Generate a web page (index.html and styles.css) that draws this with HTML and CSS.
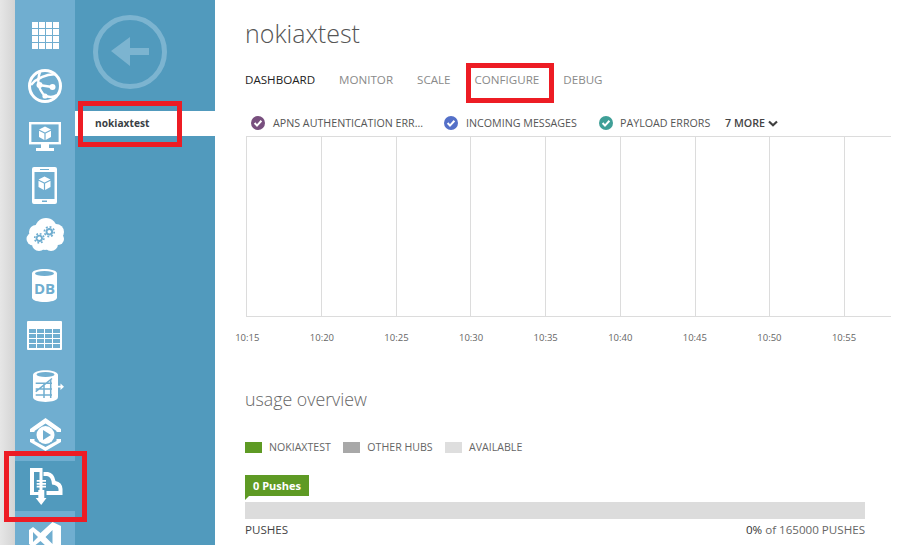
FILE: index.html
```html
<!DOCTYPE html>
<html lang="en">
<head>
    <meta charset="UTF-8">
    <title>nokiaxtest</title>
    <link rel="stylesheet" href="styles.css">
</head>
<body>
    <div class="page">
        <div class="edge"></div>

        <div class="rail">
            <svg class="rail-icon" viewBox="0 0 60 50">
                <g fill="#fff">
                    <rect x="17" y="11" width="6" height="6"/><rect x="24" y="11" width="6" height="6"/><rect x="31" y="11" width="6" height="6"/><rect x="38" y="11" width="6" height="6"/>
                    <rect x="17" y="18" width="6" height="6"/><rect x="24" y="18" width="6" height="6"/><rect x="31" y="18" width="6" height="6"/><rect x="38" y="18" width="6" height="6"/>
                    <rect x="17" y="25" width="6" height="6"/><rect x="24" y="25" width="6" height="6"/><rect x="31" y="25" width="6" height="6"/><rect x="38" y="25" width="6" height="6"/>
                    <rect x="17" y="32" width="6" height="6"/><rect x="24" y="32" width="6" height="6"/><rect x="31" y="32" width="6" height="6"/><rect x="38" y="32" width="6" height="6"/>
                </g>
            </svg>
            <svg class="rail-icon" viewBox="0 0 60 50">
                <circle cx="30" cy="25" r="15.5" fill="none" stroke="#fff" stroke-width="3"/>
                <g fill="none" stroke="#fff" stroke-width="2.4">
                    <path d="M16 24 Q24 14 41 13"/>
                    <path d="M25 11 Q20 25 30 35"/>
                    <path d="M24 24 L37 26"/>
                    <path d="M29 34 Q36 38 42 34"/>
                </g>
                <circle cx="24.5" cy="24" r="3" fill="#fff"/>
                <circle cx="37.5" cy="26" r="3" fill="#fff"/>
                <circle cx="30" cy="35" r="2.6" fill="#fff"/>
            </svg>
            <svg class="rail-icon" viewBox="0 0 60 50">
                <rect x="15.2" y="12.2" width="29.6" height="20" fill="none" stroke="#fff" stroke-width="2.4"/>
                <path d="M26 33 H34 V37 H39 V40 H21 V37 H26 Z" fill="#fff"/>
                <path d="M30 15.5 L36 18.5 L30 21.5 L24 18.5 Z M24 19.8 L29.4 22.5 V29 L24 26 Z M36 19.8 L30.6 22.5 V29 L36 26 Z" fill="#fff"/>
            </svg>
            <svg class="rail-icon" viewBox="0 0 60 50">
                <path fill-rule="evenodd" d="M19 6 H40 Q42 6 42 8 V41 Q42 43 40 43 H19 Q17 43 17 41 V8 Q17 6 19 6 Z M19.5 11 V38 H39.5 V11 Z M25 8 V9 H34 V8 Z M27 39.5 V41 H32 V39.5 Z" fill="#fff"/>
                <path d="M29.5 15.5 L35.5 18.5 L29.5 21.5 L23.5 18.5 Z M23.5 19.8 L28.9 22.5 V29 L23.5 26 Z M35.5 19.8 L30.1 22.5 V29 L35.5 26 Z" fill="#fff"/>
            </svg>
            <svg class="rail-icon" viewBox="0 0 60 50">
                <g fill="#fff">
                    <circle cx="31" cy="18" r="11"/><circle cx="21" cy="21" r="7"/><circle cx="41" cy="21" r="8"/>
                    <circle cx="18" cy="28" r="6.5"/><circle cx="43" cy="28" r="6"/><circle cx="24" cy="33" r="7"/>
                    <circle cx="36" cy="33" r="7"/><circle cx="30" cy="30" r="9"/>
                </g>
                <circle cx="24.3" cy="27.3" r="3.6" fill="#70aed0"/>
                <circle cx="24.3" cy="27.3" r="4.6" fill="none" stroke="#70aed0" stroke-width="1.6" stroke-dasharray="1.8 1.8"/>
                <circle cx="24.3" cy="27.3" r="1.7" fill="#fff"/>
                <circle cx="34.3" cy="20.7" r="3.8" fill="#70aed0"/>
                <circle cx="34.3" cy="20.7" r="4.9" fill="none" stroke="#70aed0" stroke-width="1.7" stroke-dasharray="1.9 1.9"/>
                <circle cx="34.3" cy="20.7" r="1.8" fill="#fff"/>
            </svg>
            <svg class="rail-icon" viewBox="0 0 60 50">
                <path d="M17 12.5 C17 6.5 42 6.5 42 12.5 V36.5 C42 42.5 17 42.5 17 36.5 Z" fill="#fff"/>
                <ellipse cx="29.5" cy="12.5" rx="9.5" ry="2.5" fill="#70aed0"/>
                <text class="db-text" x="29.5" y="33" text-anchor="middle">DB</text>
            </svg>
            <svg class="rail-icon" viewBox="0 0 60 50">
                <rect x="12" y="10" width="35" height="29" rx="1" fill="#fff"/>
                <g fill="#70aed0">
                    <rect x="14" y="18" width="7" height="4"/><rect x="22" y="18" width="7" height="4"/><rect x="30" y="18" width="7" height="4"/><rect x="38" y="18" width="7" height="4"/>
                    <rect x="14" y="23" width="7" height="4"/><rect x="22" y="23" width="7" height="4"/><rect x="30" y="23" width="7" height="4"/><rect x="38" y="23" width="7" height="4"/>
                    <rect x="14" y="28" width="7" height="4"/><rect x="22" y="28" width="7" height="4"/><rect x="30" y="28" width="7" height="4"/><rect x="38" y="28" width="7" height="4"/>
                    <rect x="14" y="33" width="7" height="4"/><rect x="22" y="33" width="7" height="4"/><rect x="30" y="33" width="7" height="4"/><rect x="38" y="33" width="7" height="4"/>
                </g>
            </svg>
            <svg class="rail-icon" viewBox="0 0 60 50">
                <path d="M18 14 C18 7.5 43 7.5 43 14 V36 C43 42.5 18 42.5 18 36 Z" fill="#fff"/>
                <ellipse cx="30.5" cy="13.5" rx="9" ry="2.4" fill="#70aed0"/>
                <path d="M20.7 22.3 H37 M20.7 28 H37 M20.7 34 H37 M35.7 19 V37 M37 17.5 L20.7 30.7 M29 22 V37" fill="none" stroke="#70aed0" stroke-width="1.5"/>
                <path d="M37 24.8 H45.5 V22.5 L49 25.7 L45.5 29 V26.6 H37 Z" fill="#fff"/>
            </svg>
            <svg class="rail-icon" viewBox="0 0 60 50">
                <path d="M15 18 L30.5 7 L46 18 V21 H41.5 V20 L30.5 12.5 L19.5 20 V21 H15 Z M15 28 H19.5 V30 L30.5 36 L41.5 30 V28 H46 V31 L30.5 40 L15 31 Z" fill="#fff"/>
                <circle cx="30.5" cy="24" r="9" fill="#fff"/>
                <path d="M28 19 L36 24 L28 29 Z" fill="#70aed0"/>
            </svg>
            <div class="rail-active">
                <svg class="rail-icon" viewBox="0 0 60 50">
                    <path d="M15 7 H27.5 V34 H21 V31 H24.5 V11 H19 V31 H21 V34 H15 Z" fill="#fff"/>
                    <path d="M28.5 11 H33 Q39 12 40.5 20 Q47 21 47.5 28 V34 H31.5 V30 H43.5 V28 Q43 24 37 23.5 Q36.5 15.5 32 15 H28.5 Z" fill="#fff"/>
                    <path d="M21.7 19 H31 V20.8 H21.7 Z M21.7 21.9 H31 V23.7 H21.7 Z M21.7 24.8 H31 V26.6 H21.7 Z" fill="#fff"/>
                    <path d="M23.3 29 H29.3 V37 H31.5 L26.2 44 L20.7 37 H23.3 Z" fill="#fff"/>
                </svg>
            </div>
            <svg class="rail-icon" viewBox="0 0 60 50">
                <path fill-rule="evenodd" d="M37.5 11 L46 15 V37 L37.5 41 L25.5 30 L18 36 L14 33 V19 L18 16 L25.5 22 Z M18 21 V31 L23 26 Z M37.5 19 L30.5 26 L37.5 33 Z" fill="#fff"/>
            </svg>
        </div>

        <div class="panel">
            <svg class="back-btn" viewBox="0 0 76 76">
                <circle cx="38" cy="38" r="34.5" fill="none" stroke="#7cb4d0" stroke-width="5"/>
                <path d="M19 37 L38 23 V34 H57 V41 H38 V52 Z" fill="#7cb4d0"/>
            </svg>
            <div class="panel-item">nokiaxtest</div>
        </div>

        <div class="main">
            <h1>nokiaxtest</h1>
            <div class="tabs">
                <span class="tab tab-active">DASHBOARD</span>
                <span class="tab">MONITOR</span>
                <span class="tab">SCALE</span>
                <span class="tab">CONFIGURE</span>
                <span class="tab">DEBUG</span>
            </div>

            <div class="metrics">
                <span class="metric metric-first">
                    <svg class="check" viewBox="0 0 14 14"><circle cx="7" cy="7" r="7" fill="#784f7e"/><path d="M3.6 7 L6 9.6 L10.4 4.8" fill="none" stroke="#fff" stroke-width="2"/></svg>
                    APNS AUTHENTICATION ERR...
                </span>
                <span class="metric metric-second">
                    <svg class="check" viewBox="0 0 14 14"><circle cx="7" cy="7" r="7" fill="#5470c8"/><path d="M3.6 7 L6 9.6 L10.4 4.8" fill="none" stroke="#fff" stroke-width="2"/></svg>
                    INCOMING MESSAGES
                </span>
                <span class="metric metric-third">
                    <svg class="check" viewBox="0 0 14 14"><circle cx="7" cy="7" r="7" fill="#3f9f97"/><path d="M3.6 7 L6 9.6 L10.4 4.8" fill="none" stroke="#fff" stroke-width="2"/></svg>
                    PAYLOAD ERRORS
                </span>
                <span class="more">
                    7 MORE
                    <svg class="chevron" viewBox="0 0 10 7"><path d="M1 1.5 L5 5.2 L9 1.5" fill="none" stroke="#404040" stroke-width="2.2"/></svg>
                </span>
            </div>

            <div class="chart">
                <div class="chart-col"></div>
                <div class="chart-col"></div>
                <div class="chart-col"></div>
                <div class="chart-col"></div>
                <div class="chart-col"></div>
                <div class="chart-col"></div>
                <div class="chart-col"></div>
                <div class="chart-col"></div>
                <div class="chart-col chart-col-last"></div>
            </div>
            <div class="times">
                <span>10:15</span>
                <span>10:20</span>
                <span>10:25</span>
                <span>10:30</span>
                <span>10:35</span>
                <span>10:40</span>
                <span>10:45</span>
                <span>10:50</span>
                <span>10:55</span>
            </div>

            <h2>usage overview</h2>
            <div class="usage-legend">
                <span class="swatch swatch-green"></span><span class="usage-label">NOKIAXTEST</span>
                <span class="swatch swatch-grey"></span><span class="usage-label">OTHER HUBS</span>
                <span class="swatch swatch-light"></span><span class="usage-label">AVAILABLE</span>
            </div>
            <div class="tag">0 Pushes</div>
            <div class="bar"></div>
            <div class="bar-caption">
                <span class="bar-name">PUSHES</span>
                <span class="bar-total"><b>0%</b> of 165000 PUSHES</span>
            </div>
        </div>

        <!-- red annotation boxes from the screenshot -->
        <div class="mark mark-item"></div>
        <div class="mark mark-tab"></div>
        <div class="mark mark-rail"></div>
    </div>
</body>
</html>
```

FILE: styles.css
```css
html, body {
    margin: 0;
    height: 100%;
    overflow: hidden;
    background-color: white;
}
body {
    font-family: "Open Sans", "Noto Sans", sans-serif;
    color: #666;
}
.page {
    position: relative;
    display: flex;
    width: 912px;
    height: 545px;
    overflow: hidden;
}
.edge {
    width: 15px;
    flex: none;
    background: linear-gradient(to right, #e6e6e6, #d4d4d4);
}
.rail {
    width: 60px;
    flex: none;
    padding-top: 11px;
    background-color: #70aed0;
}
.rail-icon {
    display: block;
    width: 60px;
    height: 50px;
}
.rail-active {
    background-color: #519abd;
}
.db-text {
    font-family: "Open Sans", sans-serif;
    font-size: 15px;
    font-weight: 700;
    fill: #70aed0;
}
.panel {
    width: 140px;
    flex: none;
    background-color: #519abd;
}
.back-btn {
    display: block;
    width: 76px;
    height: 76px;
    margin: 14px 0 0 17px;
}
.panel-item {
    height: 25px;
    margin-top: 21px;
    padding-left: 20px;
    line-height: 25px;
    background-color: white;
    color: #3b3f45;
    font-size: 10.2px;
    font-weight: 700;
}
.main {
    flex: 1;
    padding-left: 30px;
    min-width: 0;
}
h1 {
    margin: 15px 0 0;
    font-size: 25px;
    line-height: 36px;
    font-weight: 300;
    color: #555;
}
.tabs {
    display: flex;
    gap: 24px;
    margin-top: 20px;
    font-size: 11.6px;
    line-height: 18px;
}
.tab {
    color: #8a8a8a;
}
.tab-active {
    color: #222;
}
.metrics {
    position: relative;
    display: flex;
    align-items: center;
    height: 16px;
    margin-top: 26px;
    padding-left: 6px;
    font-size: 10.7px;
    color: #555;
}
.metric {
    display: flex;
    align-items: center;
    gap: 8px;
}
.metric-first {
    width: 193px;
}
.metric-second {
    width: 155px;
}
.metric-third {
    width: 126px;
    gap: 7px;
}
.check {
    width: 14px;
    height: 14px;
    flex: none;
}
.more {
    display: flex;
    align-items: center;
    gap: 3px;
    font-size: 10.7px;
    font-weight: 600;
    color: #444;
}
.chevron {
    width: 10px;
    height: 7px;
}
.chart {
    display: flex;
    width: 645px;
    height: 179px;
    margin: 5px 0 0 1px;
    border-top: 1px solid #dcdcdc;
    border-bottom: 1px solid #dcdcdc;
}
.chart-col {
    width: 74.75px;
    flex: none;
    box-sizing: border-box;
    border-left: 1px solid #dcdcdc;
}
.chart-col-last {
    width: 47px;
}
.times {
    display: flex;
    margin: 14px 0 0 -35px;
    font-size: 9.5px;
    line-height: 14px;
    color: #666;
}
.times span {
    width: 74.6px;
    flex: none;
    text-align: center;
}
h2 {
    margin: 41px 0 0;
    font-size: 17.8px;
    line-height: 26px;
    font-weight: 300;
    color: #666;
}
.usage-legend {
    display: flex;
    align-items: center;
    height: 14px;
    margin-top: 28px;
    font-size: 10.6px;
    color: #666;
}
.swatch {
    width: 17px;
    height: 11px;
    margin-right: 7px;
}
.usage-label {
    margin-right: 12.5px;
}
.swatch-green {
    background-color: #5e9a24;
}
.swatch-grey {
    background-color: #a8a8a8;
}
.swatch-light {
    background-color: #dedede;
}
.tag {
    position: relative;
    width: 64px;
    height: 21px;
    margin-top: 21px;
    line-height: 21px;
    text-align: center;
    background-color: #5e9a24;
    color: white;
    font-size: 11px;
    font-weight: 700;
}
.tag::after {
    content: "";
    position: absolute;
    left: 0;
    top: 21px;
    border-top: 4px solid #5e9a24;
    border-right: 4px solid transparent;
}
.bar {
    width: 620px;
    height: 17px;
    margin-top: 6px;
    background-color: #dcdcdc;
}
.bar-caption {
    display: flex;
    justify-content: space-between;
    width: 620px;
    margin-top: 3px;
    font-size: 11.6px;
    line-height: 16px;
    color: #666;
}
.bar-name {
    color: #444;
}
.bar-total b {
    font-weight: 400;
    color: #333;
}
.mark {
    position: absolute;
    box-sizing: border-box;
    border: 5px solid #ed1c24;
}
.mark-item {
    left: 78px;
    top: 101px;
    width: 104px;
    height: 46px;
}
.mark-tab {
    left: 466px;
    top: 63px;
    width: 88px;
    height: 40px;
}
.mark-rail {
    left: 4px;
    top: 451px;
    width: 83px;
    height: 71px;
}
```
